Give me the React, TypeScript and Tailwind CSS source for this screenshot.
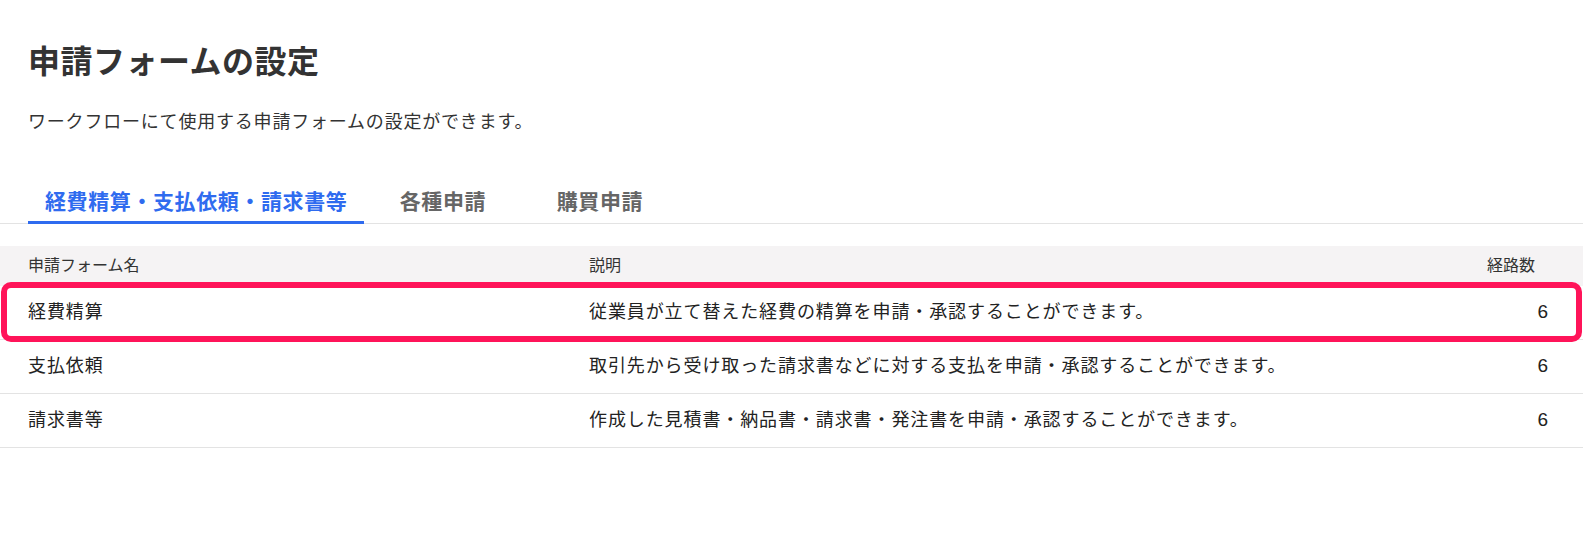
const rows = [
  { name: "経費精算", desc: "従業員が立て替えた経費の精算を申請・承認することができます。", routes: 6, highlight: true },
  { name: "支払依頼", desc: "取引先から受け取った請求書などに対する支払を申請・承認することができます。", routes: 6 },
  { name: "請求書等", desc: "作成した見積書・納品書・請求書・発注書を申請・承認することができます。", routes: 6 },
];

const tabs = ["経費精算・支払依頼・請求書等", "各種申請", "購買申請"];

export default function App() {
  return (
    <div
      className="min-h-[538px] w-full bg-white text-[#333]"
      style={{ fontFamily: '"Liberation Sans", "Noto Sans CJK JP", sans-serif' }}
    >
      <div className="pl-[28px] pt-[42px]">
        <h1 className="text-[32px] font-bold leading-[40px] tracking-[0.5px] text-[#333]">申請フォームの設定</h1>
        <p className="mt-[26px] text-[18px] leading-[28px] tracking-[0.8px] text-[#333]">
          ワークフローにて使用する申請フォームの設定ができます。
        </p>
      </div>

      {/* tabs */}
      <div className="mt-[51px] flex border-b border-[#e3e3e3] pl-[28px]">
        {tabs.map((t, i) => (
          <div
            key={t}
            className={
              i === 0
                ? "-mb-px min-w-[157px] border-b-[3px] border-[#2f6bef] px-[17px] pb-[4px] text-center text-[21px] font-bold leading-[30px] tracking-[0.6px] text-[#2f6bef]"
                : "-mb-px min-w-[157px] border-b-[3px] border-transparent px-[17px] pb-[4px] text-center text-[21px] font-bold leading-[30px] tracking-[0.6px] text-[#666]"
            }
          >
            {t}
          </div>
        ))}
      </div>

      {/* table */}
      <div className="mt-[22px]">
        <div className="flex h-[40px] items-center bg-[#f5f3f4] pl-[28px] text-[16px] text-[#333]">
          <div className="w-[561px]">申請フォーム名</div>
          <div className="flex-1">説明</div>
          <div className="pr-[48px]">経路数</div>
        </div>
        {rows.map((r) => (
          <div
            key={r.name}
            className="relative flex h-[54px] items-center border-b border-[#e3e3e3] pl-[28px] text-[18px] tracking-[0.9px] text-[#222]"
          >
            <div className="w-[561px]">{r.name}</div>
            <div className="flex-1">{r.desc}</div>
            <div className="pr-[34px] text-[19px] font-light">{r.routes}</div>
            {r.highlight && (
              <div className="pointer-events-none absolute -top-[4px] -bottom-[3px] left-[1px] right-[1px] rounded-[10px] border-[6px] border-[#ff1459]" />
            )}
          </div>
        ))}
      </div>
    </div>
  );
}
